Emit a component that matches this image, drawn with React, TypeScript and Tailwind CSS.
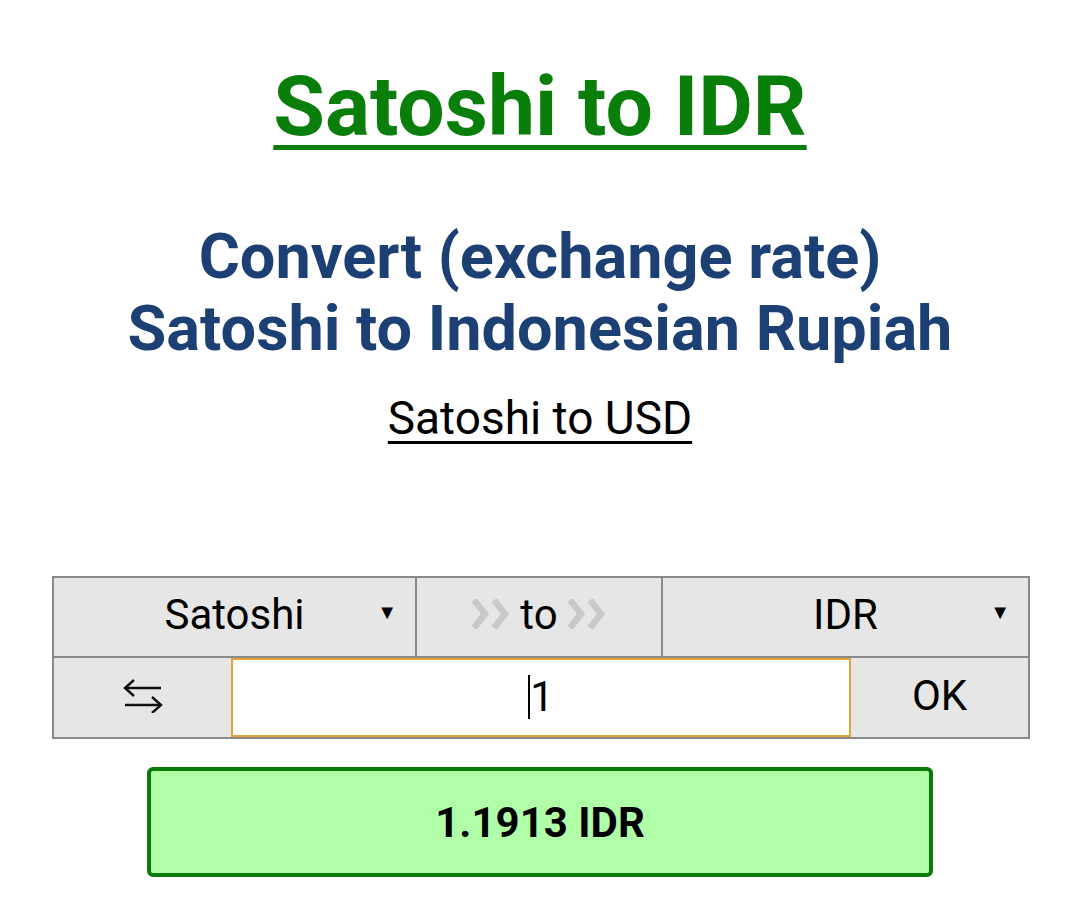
import React from 'react';

const font = { fontFamily: 'Roboto, "Liberation Sans", sans-serif' };

const Chevrons = () => (
  <svg width="42" height="30" viewBox="0 0 42 30" className="inline-block">
    <path d="M4 1 L15 15 L4 29" fill="none" stroke="#c9c9c9" strokeWidth="6.5" />
    <path d="M24 1 L35 15 L24 29" fill="none" stroke="#c9c9c9" strokeWidth="6.5" />
  </svg>
);

const SwapIcon = () => (
  <svg width="40" height="34" viewBox="0 0 40 34" fill="none" stroke="#111" strokeWidth="2.4">
    <path d="M2 9 H38" />
    <path d="M11 1 L2 9 L11 17" />
    <path d="M2 26 H38" />
    <path d="M29 18 L38 26 L29 34" />
  </svg>
);

export default function App() {
  return (
    <div className="w-[1080px] h-[917px] bg-white text-center" style={font}>
      {/* heading */}
      <div className="pt-[56px]">
        <a className="text-[84px] leading-[101px] font-bold text-[#0a7e0a] underline decoration-[5px] underline-offset-[10px]">
          Satoshi to IDR
        </a>
      </div>

      <h2 className="mt-[64px] text-[63px] leading-[72px] font-bold text-[#1c3f74]">
        Convert (exchange rate)
        <br />
        Satoshi to Indonesian Rupiah
      </h2>

      <div className="mt-[26px]">
        <a className="text-[46px] leading-[54px] text-black underline decoration-[3px] underline-offset-[7px]">
          Satoshi to USD
        </a>
      </div>

      {/* converter table */}
      <div className="ml-[52px] mr-[50px] mt-[131px] border-2 border-[#8a8a8a] bg-[#e6e6e6] text-[42px] text-black">
        <div className="flex h-[80px] border-b-2 border-[#8a8a8a]">
          <div className="relative flex w-[363px] items-center justify-center border-r-2 border-[#8a8a8a] pb-[6px]">
            <span>Satoshi</span>
            <span className="absolute right-[18px] top-[19px] text-[20px] leading-[30px]">▼</span>
          </div>
          <div className="flex w-[246px] items-center justify-center gap-[8px] border-r-2 border-[#8a8a8a] pb-[6px]">
            <Chevrons />
            <span>to</span>
            <Chevrons />
          </div>
          <div className="relative flex flex-1 items-center justify-center pb-[6px]">
            <span>IDR</span>
            <span className="absolute right-[18px] top-[19px] text-[20px] leading-[30px]">▼</span>
          </div>
        </div>
        <div className="flex h-[79px]">
          <div className="flex w-[177px] items-center justify-center pb-[4px]">
            <SwapIcon />
          </div>
          <div className="flex w-[620px] items-center justify-center border-2 border-[#e0a43a] bg-white pb-[2px]">
            <span className="inline-block h-[44px] w-[2px] bg-black" />
            <span>1</span>
          </div>
          <div className="flex flex-1 items-center justify-center pb-[4px]">OK</div>
        </div>
      </div>

      {/* result */}
      <div className="mx-auto mt-[28px] flex h-[110px] w-[786px] items-center justify-center rounded-[6px] border-4 border-[#0a7a0a] bg-[#b0ffa8]">
        <span className="text-[42px] font-bold text-black">1.1913 IDR</span>
      </div>
    </div>
  );
}
